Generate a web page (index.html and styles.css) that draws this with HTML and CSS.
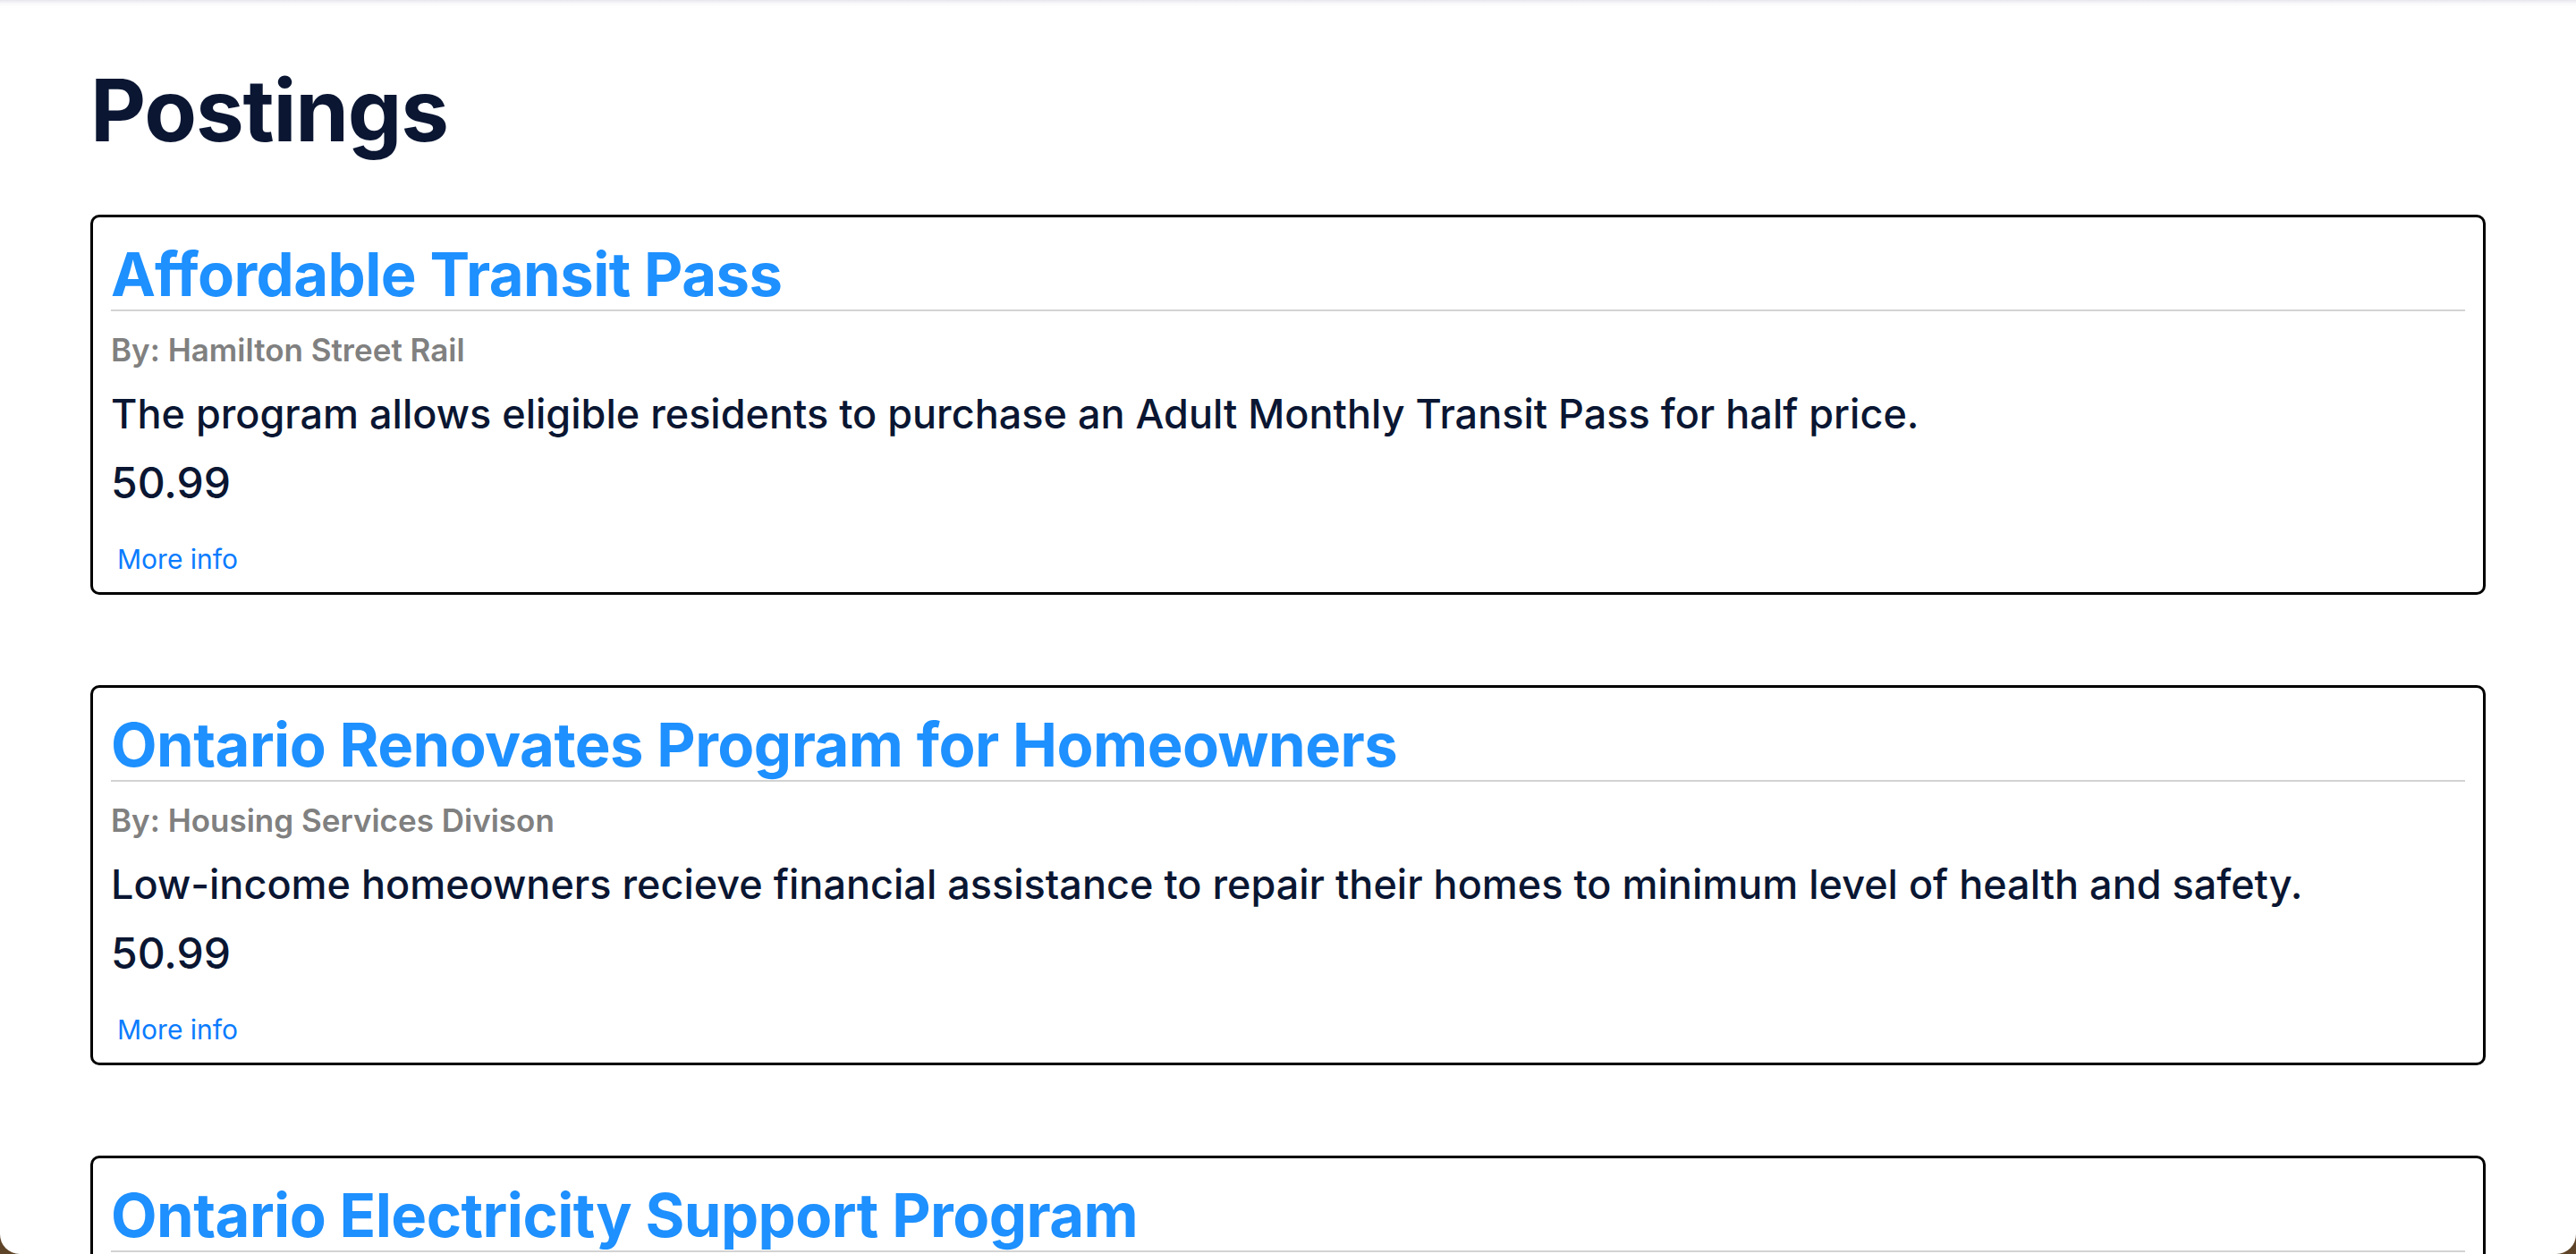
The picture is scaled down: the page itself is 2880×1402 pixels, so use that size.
FILE: index.html
```html
<!DOCTYPE html>
<html lang="en">
<head>
<meta charset="utf-8">
<title>Postings</title>
<link rel="stylesheet" href="styles.css">
</head>
<body>
<div class="frame"></div>
<main class="page">
  <h1 class="page-title">Postings</h1>
  <section class="postings">
    <article class="card">
      <h2 class="card-title">Affordable Transit Pass</h2>
      <p class="card-by">By: Hamilton Street Rail</p>
      <p class="card-desc">The program allows eligible residents to purchase an Adult Monthly Transit Pass for half price.</p>
      <p class="card-price">50.99</p>
      <a class="card-link" href="#">More info</a>
    </article>
    <article class="card">
      <h2 class="card-title">Ontario Renovates Program for Homeowners</h2>
      <p class="card-by">By: Housing Services Divison</p>
      <p class="card-desc">Low-income homeowners recieve financial assistance to repair their homes to minimum level of health and safety.</p>
      <p class="card-price">50.99</p>
      <a class="card-link" href="#">More info</a>
    </article>
    <article class="card">
      <h2 class="card-title">Ontario Electricity Support Program</h2>
      <p class="card-by">By: Ontario Energy Board</p>
      <p class="card-desc">Eligible low-income households receive a monthly credit on their electricity bill.</p>
      <p class="card-price">50.99</p>
      <a class="card-link" href="#">More info</a>
    </article>
  </section>
</main>
</body>
</html>
```
FILE: styles.css
```css
html, body {
  margin: 0;
  padding: 0;
  background: #ffffff;
}

body {
  font-family: Inter, "Noto Sans", sans-serif;
  color: #0a1632;
}

.frame {
  position: fixed;
  inset: 0;
  pointer-events: none;
  border-radius: 0 0 22px 22px;
  box-shadow: 0 0 0 60px #5e4428;
  background: linear-gradient(to bottom, rgba(200, 200, 215, 0.45) 0, rgba(230, 230, 240, 0.2) 4px, rgba(255, 255, 255, 0) 9px);
  z-index: 10;
}

.page {
  padding: 66px 101px 0 101px;
}

.page-title {
  margin: 0 0 59px 0;
  font-size: 96px;
  line-height: 115px;
  font-weight: 700;
  letter-spacing: -1.2px;
  color: #0a1632;
}

.postings {
  display: flex;
  flex-direction: column;
  gap: 101px;
}

.card {
  border: 3px solid #000000;
  border-radius: 10px;
  padding: 25px 20px 19px 20px;
  display: flex;
  flex-direction: column;
  align-items: flex-start;
}

.card-title {
  align-self: stretch;
  margin: 0;
  font-size: 67px;
  line-height: 78px;
  font-weight: 700;
  letter-spacing: -0.55px;
  color: #1e90ff;
  border-bottom: 2px solid #d3d3d3;
}

.card-by {
  margin: 23px 0 0 0;
  font-size: 35px;
  line-height: 41px;
  font-weight: 600;
  color: #808080;
}

.card-desc {
  margin: 24px 0 0 0;
  font-size: 45px;
  line-height: 53px;
  font-weight: 500;
  color: #0a1632;
}

.card-price {
  margin: 22px 0 0 0;
  font-size: 48px;
  line-height: 57px;
  font-weight: 500;
  color: #0a1632;
}

.card-link {
  margin: 39px 0 0 0;
  padding: 0 7px;
  font-size: 30px;
  line-height: 36px;
  font-weight: 400;
  color: #0a7cff;
  text-decoration: none;
}
```
